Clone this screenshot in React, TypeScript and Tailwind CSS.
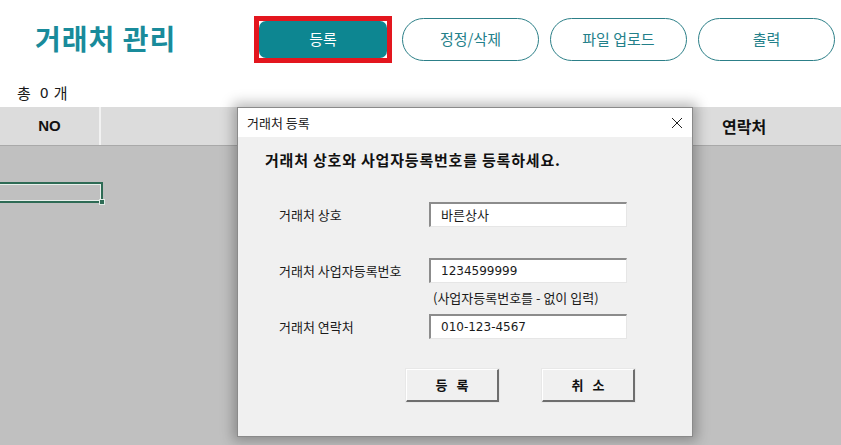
import React from "react";

const KR = { fontFamily: '"Noto Sans CJK KR", "Noto Sans", sans-serif' };
const NUM = { fontFamily: '"DejaVu Sans", "Noto Sans CJK KR", sans-serif' };

function Field({ label, value, kr }: { label: string; value: string; kr?: boolean }) {
  return (
    <div className="flex items-center h-[25px]">
      <div className="w-[150px] text-[13px] text-[#1a1a1a] leading-none" style={KR}>
        {label}
      </div>
      <div
        className={
          "w-[198px] h-[25px] bg-white border-t-2 border-l-2 border-b border-r border-t-[#8c8c8c] border-l-[#8c8c8c] border-b-[#e6e6e6] border-r-[#e6e6e6] flex items-center pl-[10px] text-[#1a1a1a] " +
          (kr ? "text-[13px]" : "text-[12px]")
        }
        style={kr ? KR : NUM}
      >
        {value}
      </div>
    </div>
  );
}

function WinButton({ children }: { children: React.ReactNode }) {
  return (
    <div className="w-[93px] h-[33px] bg-[#f0f0f0] border-t border-l border-b-2 border-r-2 border-t-[#ffffff] border-l-[#ffffff] border-b-[#6e6e6e] border-r-[#6e6e6e] shadow-[0_0_0_1px_#e8e8e8] flex items-center justify-center">
      <span className="text-[13px] font-bold text-[#111] whitespace-pre" style={KR}>
        {children}
      </span>
    </div>
  );
}

export default function App() {
  return (
    <div className="relative w-[841px] h-[445px] overflow-hidden bg-white flex flex-col" style={KR}>
      {/* header */}
      <div className="flex items-center h-[79px] shrink-0">
        <div className="w-[254px] pl-[35px]">
          <span className="text-[28px] font-bold text-[#198b9b] leading-none tracking-[1px]" style={KR}>
            거래처 관리
          </span>
        </div>
        <div className="w-[138px] h-[47px] border-[5px] border-[#e3161e] bg-white">
          <div className="w-full h-full rounded-[7px] bg-[#0d8691] flex items-center justify-center text-white text-[15px]">
            등록
          </div>
        </div>
        <div className="flex gap-[11px] ml-[10px]">
          {["정정/삭제", "파일 업로드", "출력"].map((t) => (
            <div
              key={t}
              className="w-[137px] h-[43px] rounded-full border-[1.5px] border-[#2c7f88] flex items-center justify-center text-[15px] text-[#23808a]"
            >
              {t}
            </div>
          ))}
        </div>
      </div>

      {/* count */}
      <div className="h-[28px] shrink-0 flex items-center pl-[17px] text-[15px] text-[#1a1a1a]">
        <span>총</span>
        <span className="ml-[9px] text-[14px]" style={NUM}>0</span>
        <span className="ml-[5px]">개</span>
      </div>

      {/* table header */}
      <div className="h-[39px] shrink-0 flex bg-[#dcdcdc] border-b border-[#a9a9a9]">
        <div
          className="w-[101px] flex items-center justify-center text-[15px] font-bold text-[#111] border-r-2 border-[#f2f2f2]"
          style={{ fontFamily: '"Liberation Sans", Arial, sans-serif' }}
        >
          NO
        </div>
        <div className="w-[580px]" />
        <div className="flex-1 flex items-center pl-[41px] text-[16px] font-bold text-[#111]">연락처</div>
      </div>

      {/* sheet area */}
      <div className="flex-1 bg-[#c0c0c0]">
        <div className="relative mt-[36px] -ml-[4px] w-[107px] h-[21px] border-2 border-[#2e6b55] shadow-[inset_0_0_0_1px_#e8f0ec]">
          <div className="absolute -right-[4px] -bottom-[4px] w-[6px] h-[6px] bg-[#2e6b55] border border-[#e0ece6]" />
        </div>
      </div>

      {/* dialog */}
      <div className="absolute left-[237px] top-[107px] w-[456px] h-[330px] border border-[#8a8a8a] bg-[#f0f0f0] shadow-[0_0_12px_4px_rgba(0,0,0,0.28)] flex flex-col">
        <div className="h-[29px] bg-white flex items-center justify-between pl-[9px] pr-[8px] shrink-0">
          <span className="text-[13px] text-[#1a1a1a]">거래처 등록</span>
          <svg width="12" height="12" viewBox="0 0 12 12" className="mr-[1px]">
            <path d="M1 1 L11 11 M11 1 L1 11" stroke="#222" strokeWidth="1" fill="none" />
          </svg>
        </div>
        <div className="flex-1 flex flex-col pl-[41px]">
          <div className="mt-[13px] h-[20px] -ml-[14px] flex items-center text-[15px] font-bold text-[#111] tracking-[0.8px]">
            거래처 상호와 사업자등록번호를 등록하세요.
          </div>
          <div className="mt-[32px]">
            <Field label="거래처 상호" value="바른상사" kr />
          </div>
          <div className="mt-[31px]">
            <Field label="거래처 사업자등록번호" value="1234599999" />
          </div>
          <div className="mt-[6px] h-[18px] ml-[154px] flex items-center text-[13px] text-[#1a1a1a]">
            (사업자등록번호를 - 없이 입력)
          </div>
          <div className="mt-[7px]">
            <Field label="거래처 연락처" value="010-123-4567" />
          </div>
          <div className="mt-[30px] ml-[127px] flex gap-[43px]">
            <WinButton>{"등   록"}</WinButton>
            <WinButton>{"취   소"}</WinButton>
          </div>
        </div>
      </div>
    </div>
  );
}
